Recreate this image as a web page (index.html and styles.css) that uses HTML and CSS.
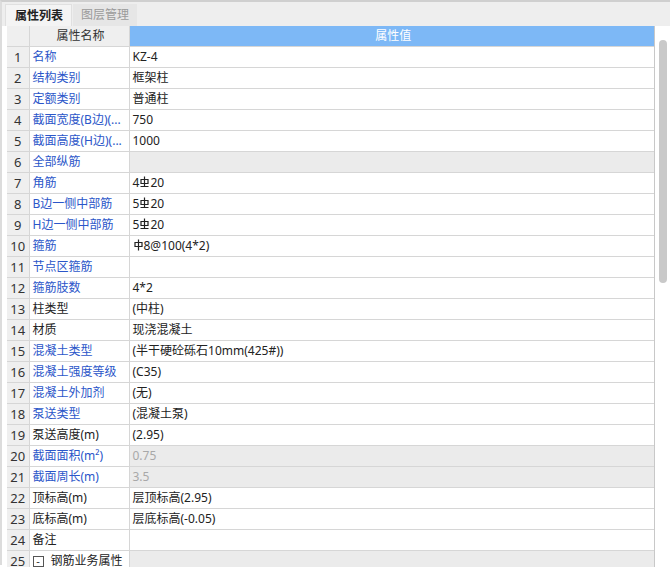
FILE: index.html
```html
<!DOCTYPE html>
<html lang="zh-CN">
<head>
<meta charset="utf-8">
<title>属性列表</title>
<link rel="stylesheet" href="styles.css">
</head>
<body>
<div class="panel">
  <div class="tabs">
    <div class="tab active">属性列表</div>
    <div class="tab">图层管理</div>
  </div>
  <div class="body">
    <div class="grid-wrap">
      <table class="grid">
        <colgroup><col class="c-num"><col class="c-name"><col class="c-val"></colgroup>
        <thead>
          <tr><th class="num"></th><th class="name-h">属性名称</th><th class="val-h">属性值</th></tr>
        </thead>
        <tbody>
          <tr><td class="num">1</td><td class="blue">名称</td><td>KZ-4</td></tr>
          <tr><td class="num">2</td><td class="blue">结构类别</td><td>框架柱</td></tr>
          <tr><td class="num">3</td><td class="blue">定额类别</td><td>普通柱</td></tr>
          <tr><td class="num">4</td><td class="blue">截面宽度(B边)(...</td><td>750</td></tr>
          <tr><td class="num">5</td><td class="blue">截面高度(H边)(...</td><td>1000</td></tr>
          <tr><td class="num">6</td><td class="blue">全部纵筋</td><td class="dis"></td></tr>
          <tr><td class="num">7</td><td class="blue">角筋</td><td>4<svg class="rb" viewBox="0 0 9 12"><path d="M4.5 0.5V10.5M1 3.5H8V7.5H1Z M0.5 10.5H8.5" fill="none" stroke="#222" stroke-width="1.2"/></svg>20</td></tr>
          <tr><td class="num">8</td><td class="blue">B边一侧中部筋</td><td>5<svg class="rb" viewBox="0 0 9 12"><path d="M4.5 0.5V10.5M1 3.5H8V7.5H1Z M0.5 10.5H8.5" fill="none" stroke="#222" stroke-width="1.2"/></svg>20</td></tr>
          <tr><td class="num">9</td><td class="blue">H边一侧中部筋</td><td>5<svg class="rb" viewBox="0 0 9 12"><path d="M4.5 0.5V10.5M1 3.5H8V7.5H1Z M0.5 10.5H8.5" fill="none" stroke="#222" stroke-width="1.2"/></svg>20</td></tr>
          <tr><td class="num">10</td><td class="blue">箍筋</td><td><svg class="rb" viewBox="0 0 9 12"><path d="M4.5 0.5V11.5M1 3.5H8V7.5H1Z" fill="none" stroke="#222" stroke-width="1.2"/></svg>8@100(4*2)</td></tr>
          <tr><td class="num">11</td><td class="blue">节点区箍筋</td><td></td></tr>
          <tr><td class="num">12</td><td class="blue">箍筋肢数</td><td>4*2</td></tr>
          <tr><td class="num">13</td><td>柱类型</td><td>(中柱)</td></tr>
          <tr><td class="num">14</td><td>材质</td><td>现浇混凝土</td></tr>
          <tr><td class="num">15</td><td class="blue">混凝土类型</td><td>(半干硬砼砾石10mm(425#))</td></tr>
          <tr><td class="num">16</td><td class="blue">混凝土强度等级</td><td>(C35)</td></tr>
          <tr><td class="num">17</td><td class="blue">混凝土外加剂</td><td>(无)</td></tr>
          <tr><td class="num">18</td><td class="blue">泵送类型</td><td>(混凝土泵)</td></tr>
          <tr><td class="num">19</td><td>泵送高度(m)</td><td>(2.95)</td></tr>
          <tr><td class="num">20</td><td class="blue">截面面积(m²)</td><td class="dis">0.75</td></tr>
          <tr><td class="num">21</td><td class="blue">截面周长(m)</td><td class="dis">3.5</td></tr>
          <tr><td class="num">22</td><td>顶标高(m)</td><td>层顶标高(2.95)</td></tr>
          <tr><td class="num">23</td><td>底标高(m)</td><td>层底标高(-0.05)</td></tr>
          <tr><td class="num">24</td><td>备注</td><td></td></tr>
          <tr><td class="num">25</td><td><span class="toggle">-</span>钢筋业务属性</td><td class="dis"></td></tr>
        </tbody>
      </table>
    </div>
    <div class="scroll"><div class="thumb"></div></div>
  </div>
</div>
</body>
</html>
```
FILE: styles.css
```css
html, body {
  margin: 0;
  padding: 0;
  background: #ffffff;
}
body {
  width: 670px;
  height: 567px;
  overflow: hidden;
  font-family: "Noto Sans", "Noto Sans CJK SC", sans-serif;
  font-size: 12px;
  color: #222;
}
.panel {
  border-top: 2px solid #cfcfcf;
  border-left: 2px solid #dcdcdc;
  height: 565px;
  box-sizing: border-box;
}
.tabs {
  display: flex;
  height: 24px;
  background: #eeeeee;
  padding-left: 3px;
  align-items: flex-end;
  gap: 1px;
}
.tab {
  height: 22px;
  line-height: 22px;
  padding: 0 8px;
  color: #9a9a9a;
  background: #e6e6e6;
  box-sizing: border-box;
}
.tab.active {
  background: #f4f4f4;
  color: #222;
  font-weight: bold;
  padding: 0 8px 0 9px;
  border: 1px solid #e0e0e0;
  border-bottom: none;
  line-height: 21px;
}
.body {
  display: flex;
  padding-left: 5px;
}
.grid-wrap {
  width: 647px;
  border-right: 1px solid #c8c8c8;
}
.grid {
  border-collapse: collapse;
  table-layout: fixed;
  width: 647px;
}
.c-num { width: 22px; }
.c-name { width: 100px; }
.c-val { width: 525px; }
.grid th, .grid td {
  height: 20px;
  padding: 0 0 0 3px;
  border-bottom: 1px solid #d6d6d6;
  border-right: 1px solid #d6d6d6;
  white-space: nowrap;
  overflow: hidden;
  text-align: left;
  font-weight: normal;
  line-height: 20px;
  box-sizing: content-box;
}
.grid th {
  background: #efefef;
  color: #333;
}
.grid th.name-h {
  text-align: center;
}
.grid th.val-h {
  background: #7db8f6;
  color: #ffffff;
  text-align: center;
  border-right: none;
}
.grid td:last-child { border-right: none; }
.grid td.num, .grid th.num {
  background: #efefef;
  text-align: center;
  padding: 0;
  color: #333;
  font-size: 13px;
}
.grid td.blue { color: #2b56c9; }
.grid td.dis {
  background: #ebebeb;
  color: #a8a8a8;
}
.rb {
  width: 9px;
  height: 12px;
  vertical-align: -1px;
  margin: 0 1px 0 1px;
}
.toggle {
  display: inline-block;
  width: 9px;
  height: 9px;
  border: 1px solid #555;
  line-height: 8px;
  text-align: center;
  font-size: 11px;
  margin-right: 7px;
  vertical-align: 0;
  color: #333;
}
.scroll {
  width: 16px;
}
.thumb {
  margin: 14px 0 0 4px;
  width: 8px;
  height: 243px;
  border-radius: 4px;
  background: #c9c9c9;
}
```
